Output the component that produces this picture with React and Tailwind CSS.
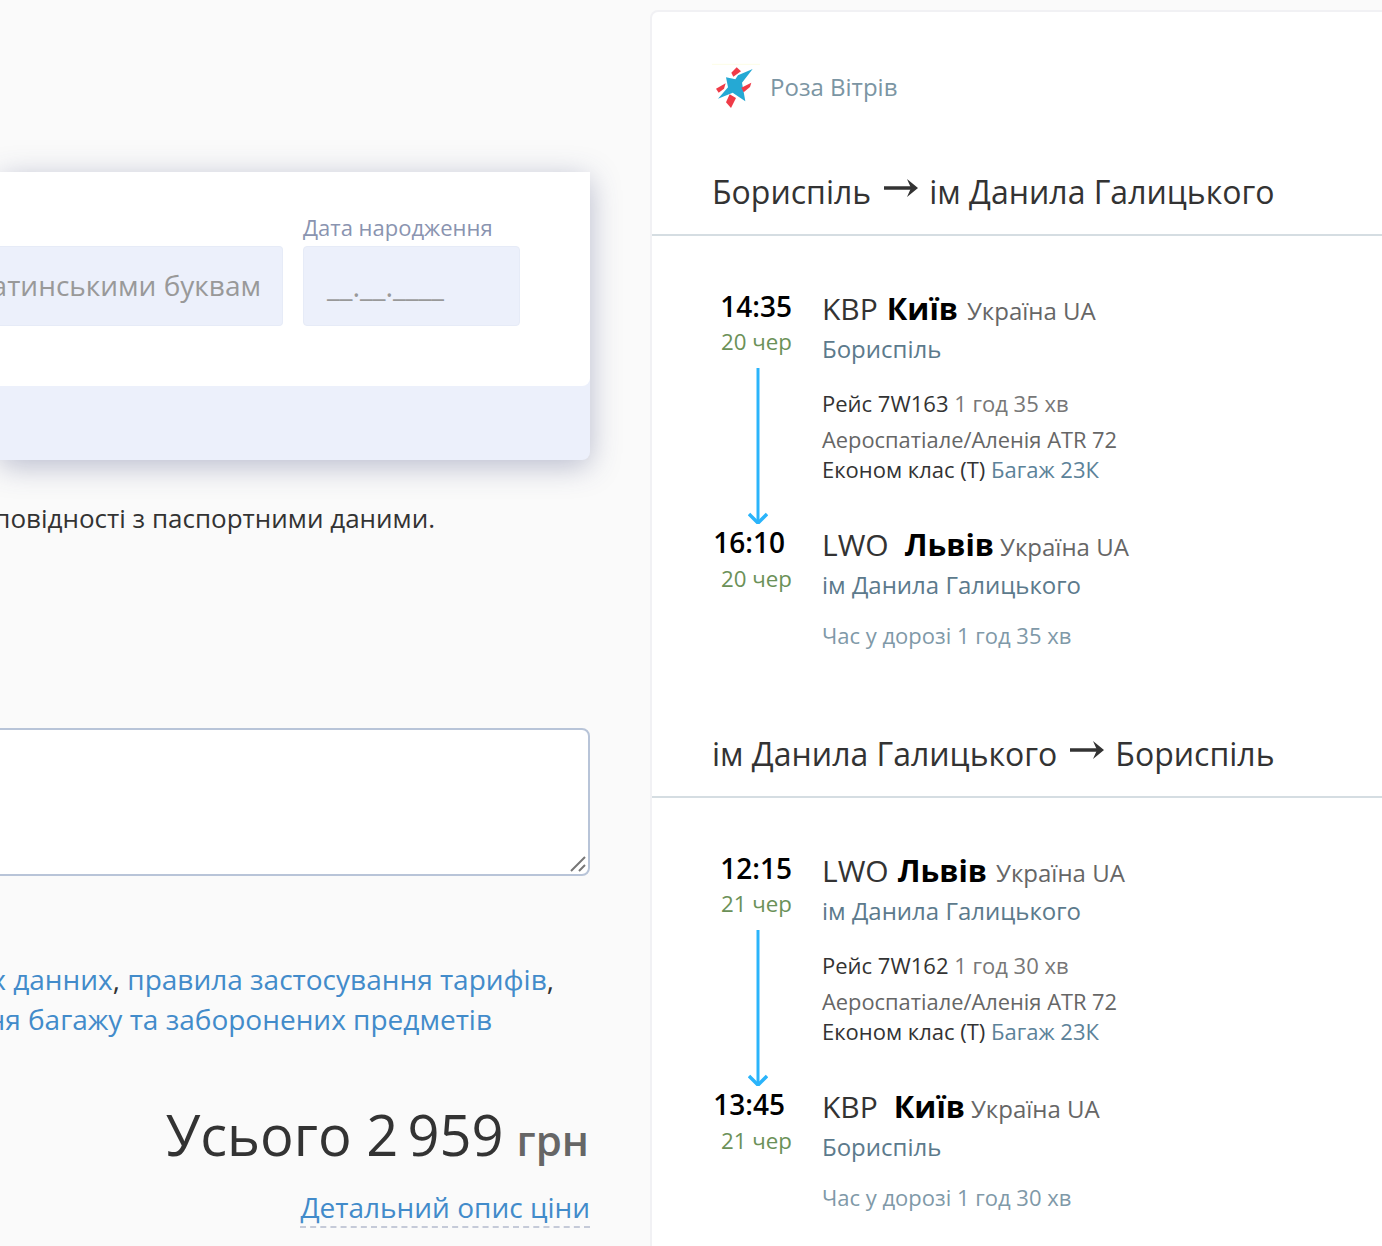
const font = { fontFamily: '"Open Sans", sans-serif' };

const LogoIcon = () => (
  <svg width="56" height="52" viewBox="0 0 168 156" className="shrink-0">
    <path d="M6 13 H150" stroke="#fdfde6" strokeWidth="3" />
    <path d="M128 27 L84 46 L76 58 L48 52 L54 82 L24 116 L68 98 L106 124 L96 68 Z" fill="#25a9d4" />
    <path d="M80 22 L93 34 L70 50 L64 38 Z" fill="#ef3b47" />
    <path d="M124 68 L120 81 L101 97 L94 83 Z" fill="#ef3b47" />
    <path d="M18 86 L47 70 L42 86 L26 98 Z" fill="#ef3b47" />
    <path d="M59 103 L78 114 L63 144 L48 127 Z" fill="#ef3b47" />
  </svg>
);

const RouteTitle = ({ from, to }) => (
  <div className="flex h-[64px] items-start gap-[13px] whitespace-nowrap border-b-2 border-[#d5dde2] pl-[60px] text-[32px] leading-[40px] text-[#333]">
    {from}
    <svg width="34" height="24" viewBox="0 0 34 24" className="mt-[4px] -mr-[2px] shrink-0">
      <path d="M0 12 H30" stroke="#333" strokeWidth="3.5" />
      <path d="M23 3 L34 12 L23 21 L27 12 Z" fill="#333" />
    </svg>
    {to}
  </div>
);

const Stop = ({ time, date, code, city, country, airport, shift, dateShift, codeGap, cityGap }) => (
  <div className="flex">
    <div className="flex w-[170px] shrink-0 flex-col items-end pr-[30px] pt-[1px]">
      <div className={`h-[36px] text-[28px] font-semibold leading-[36px] text-black ${shift}`}>{time}</div>
      <div className={`text-[22.3px] leading-[36px] text-[#6b9158] ${dateShift}`}>{date}</div>
    </div>
    <div className="min-w-0 pt-[3px]">
      <div className="flex h-[36px] items-baseline whitespace-nowrap leading-[36px]">
        <span className={`text-[30px] text-[#333] ${codeGap}`}>{code}</span>
        <span className={`text-[30.6px] font-bold text-black ${cityGap}`}>{city}</span>
        <span className="text-[24px] text-[#666]">{country}</span>
      </div>
      <div className="mt-[5px] text-[24px] leading-[36px] text-[#5c7a8c]">{airport}</div>
    </div>
  </div>
);

const Segment = ({ flight, length, total, dep, arr }) => (
  <div className="pt-[51px]">
    <Stop {...dep} cityGap="mr-[9px]" />
    <div className="flex h-[156px]">
      <div className="flex w-[170px] shrink-0 justify-end pr-[54px] pt-[1px]">
        <svg width="20" height="156" viewBox="0 0 20 156" className="block">
          <path d="M10 0 V154" stroke="#2ab4fb" strokeWidth="3" fill="none" />
          <path d="M1 146 L10 155 L19 146" stroke="#2ab4fb" strokeWidth="3.5" fill="none" />
        </svg>
      </div>
      <div className="whitespace-nowrap pt-[18px] text-[22px] text-[#333]">
        <div className="h-[36px] leading-[36px]">
          Рейс {flight} <span className="text-[#777]">{length}</span>
        </div>
        <div className="h-[36px] pt-[1px] text-[21.85px] leading-[36px] text-[#666]">Аероспатіале/Аленія ATR 72</div>
        <div className="h-[24px] leading-[24px]">
          Економ клас (Т) <span className="text-[#5c8299]">Багаж 23К</span>
        </div>
      </div>
    </div>
    <Stop {...arr} cityGap="mr-[6px]" dateShift="mt-[1px]" />
    <div className="mt-[14px] pl-[170px] text-[22px] leading-[36px] text-[#7f99a8]">Час у дорозі {total}</div>
  </div>
);

export default function App() {
  return (
    <div className="flex h-[1246px] w-[1382px] overflow-hidden bg-[#fafafa]" style={font}>
      <div className="w-[590px] shrink-0">
        <div className="mt-[172px] h-[288px] rounded-r-lg bg-[#ecf0fb] shadow-[0_6px_30px_rgba(60,70,120,0.35)]">
          <div className="flex h-[214px] justify-end gap-[20px] rounded-br-lg bg-white pr-[70px] pt-[40px]">
            <div className="mt-[34px] flex h-[80px] w-[283px] items-center justify-end overflow-hidden whitespace-nowrap rounded-r border border-l-0 border-[#e6ebf7] bg-[#ecf0fb] pb-[2px] pr-[21px] text-[28px] text-[#999]">
              латинськими буквам
            </div>
            <div className="w-[217px]">
              <div className="h-[34px] text-[22px] leading-[30px] text-[#8a94b0]">Дата народження</div>
              <div className="flex h-[80px] items-center rounded border border-[#e6ebf7] bg-[#ecf0fb] pl-[23px] text-[29px] text-[#999]">__.__.____</div>
            </div>
          </div>
        </div>
        <div className="mt-[40px] flex justify-end overflow-hidden whitespace-nowrap pr-[155px] text-[26px] leading-[36px] text-[#333]">
          відповідності з паспортними даними.
        </div>
        <div className="relative mt-[192px] flex h-[148px] justify-end overflow-hidden">
          <textarea className="block h-[148px] w-[800px] shrink-0 resize-none rounded-lg border-2 border-[#b8c4d8] bg-white" />
          <svg width="20" height="20" viewBox="0 0 20 20" className="absolute bottom-[2px] right-[2px]">
            <path d="M3 17 L17 3 M11 17 L17 11" stroke="#777" strokeWidth="2" fill="none" />
          </svg>
        </div>
        <div className="mt-[83px] overflow-hidden whitespace-nowrap text-[28px] leading-[40px] text-[#428bca]">
          <div className="flex justify-end pr-[36px]">
            <span>обробки персональних данних</span>
            <span className="text-[#333]">,&nbsp;</span>
            <span>правила застосування тарифів</span>
            <span className="text-[#333]">,</span>
          </div>
          <div className="flex justify-end pr-[98px]">перевезення багажу та заборонених предметів</div>
        </div>
        <div className="mt-[55px] flex items-baseline justify-end whitespace-nowrap pr-[1px] text-[56px] leading-[80px] text-[#333]">
          Усього 2&#8201;959
          <span className="ml-[13px] text-[42px] font-semibold text-[#666]">грн</span>
        </div>
        <div className="mt-[8px] flex justify-end">
          <span className="border-b-2 border-dashed border-[#c5cad8] text-[28px] leading-[38px] text-[#428bca]">Детальний опис ціни</span>
        </div>
      </div>
      <div className="ml-[60px] mt-[10px] w-[800px] shrink-0 rounded-tl-lg border-2 border-b-0 border-[#f1f1f4] bg-white">
        <div className="flex h-[160px] items-start gap-[4px] pl-[58px] pt-[48px] text-[24px] leading-[52px] text-[#7b95a3]">
          <LogoIcon />
          <span className="mt-[1px]">Роза Вітрів</span>
        </div>
        <RouteTitle from="Бориспіль" to="ім Данила Галицького" />
        <Segment
          flight="7W163"
          length="1 год 35 хв"
          total="1 год 35 хв"
          dep={{ time: '14:35', date: '20 чер', code: 'KBP', city: 'Київ', country: 'Україна UA', airport: 'Бориспіль', codeGap: 'mr-[9px]' }}
          arr={{ time: '16:10', date: '20 чер', code: 'LWO', city: 'Львів', country: 'Україна UA', airport: 'ім Данила Галицького', shift: 'mr-[7px]', codeGap: 'mr-[16px]' }}
        />
        <div className="mt-[81px]">
          <RouteTitle from="ім Данила Галицького" to="Бориспіль" />
        </div>
        <Segment
          flight="7W162"
          length="1 год 30 хв"
          total="1 год 30 хв"
          dep={{ time: '12:15', date: '21 чер', code: 'LWO', city: 'Львів', country: 'Україна UA', airport: 'ім Данила Галицького', codeGap: 'mr-[9px]' }}
          arr={{ time: '13:45', date: '21 чер', code: 'KBP', city: 'Київ', country: 'Україна UA', airport: 'Бориспіль', shift: 'mr-[7px]', codeGap: 'mr-[16px]' }}
        />
      </div>
    </div>
  );
}
